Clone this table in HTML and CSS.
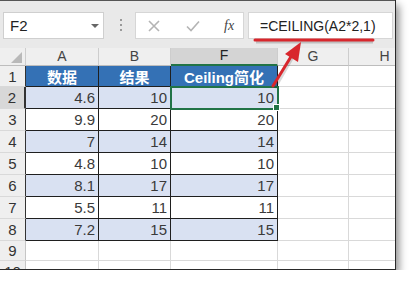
FILE: index.html
```html
<!DOCTYPE html>
<html>
<head>
<meta charset="utf-8">
<link rel="stylesheet" href="styles.css">
</head>
<body>
<div class="win">
  <div class="bar">
    <div class="namebox"><span class="nb-text">F2</span><i class="caret"></i></div>
    <div class="dots"><i></i><i></i><i></i></div>
    <div class="btns">
      <svg class="ico-x" width="12" height="12" viewBox="0 0 12 12"><path d="M1 1L11 11M11 1L1 11" stroke="#b4b4b4" stroke-width="1.6" fill="none"/></svg>
      <svg class="ico-ok" width="14" height="12" viewBox="0 0 14 12"><path d="M1 6.5L5 10.5L13 1.5" stroke="#b4b4b4" stroke-width="1.6" fill="none"/></svg>
      <span class="fx">fx</span>
    </div>
    <div class="fbox"><span class="ftext">=CEILING(A2*2,1)</span></div>
  </div>
  <div class="sheet">
    <div class="c ch corner"><i class="tri"></i></div>
    <div class="c ch">A</div>
    <div class="c ch">B</div>
    <div class="c ch chsel">F</div>
    <div class="c ch">G</div>
    <div class="c ch">H</div>

    <div class="c rh in">1</div>
    <div class="c t hd">数据</div>
    <div class="c t hd">结果</div>
    <div class="c t hd">Ceiling简化</div>
    <div class="c g"></div>
    <div class="c g"></div>

    <div class="c rh in rsel">2</div>
    <div class="c t n band">4.6</div>
    <div class="c t n band">10</div>
    <div class="c t n band sel">10</div>
    <div class="c g"></div>
    <div class="c g"></div>

    <div class="c rh in">3</div>
    <div class="c t n">9.9</div>
    <div class="c t n">20</div>
    <div class="c t n">20</div>
    <div class="c g"></div>
    <div class="c g"></div>

    <div class="c rh in">4</div>
    <div class="c t n band">7</div>
    <div class="c t n band">14</div>
    <div class="c t n band">14</div>
    <div class="c g"></div>
    <div class="c g"></div>

    <div class="c rh in">5</div>
    <div class="c t n">4.8</div>
    <div class="c t n">10</div>
    <div class="c t n">10</div>
    <div class="c g"></div>
    <div class="c g"></div>

    <div class="c rh in">6</div>
    <div class="c t n band">8.1</div>
    <div class="c t n band">17</div>
    <div class="c t n band">17</div>
    <div class="c g"></div>
    <div class="c g"></div>

    <div class="c rh in">7</div>
    <div class="c t n">5.5</div>
    <div class="c t n">11</div>
    <div class="c t n">11</div>
    <div class="c g"></div>
    <div class="c g"></div>

    <div class="c rh in">8</div>
    <div class="c t n band">7.2</div>
    <div class="c t n band">15</div>
    <div class="c t n band">15</div>
    <div class="c g"></div>
    <div class="c g"></div>

    <div class="c rh">9</div>
    <div class="c g"></div>
    <div class="c g"></div>
    <div class="c g"></div>
    <div class="c g"></div>
    <div class="c g"></div>

    <div class="c rh">10</div>
    <div class="c g"></div>
    <div class="c g"></div>
    <div class="c g"></div>
    <div class="c g"></div>
    <div class="c g"></div>
  </div>
  <svg class="anno" width="395" height="269" viewBox="0 0 395 269">
    <line x1="256" y1="42" x2="373" y2="42" stroke="rgba(0,0,0,0.18)" stroke-width="3"/>
    <line x1="255" y1="40" x2="373" y2="40" stroke="#d8262c" stroke-width="3" stroke-linecap="round"/>
    <line x1="275" y1="88" x2="294" y2="55" stroke="rgba(0,0,0,0.15)" stroke-width="3"/>
    <line x1="273" y1="86" x2="292" y2="55" stroke="#d8262c" stroke-width="3" stroke-linecap="round"/>
    <polygon points="301,42 298,62 285,54" fill="#d8262c"/>
  </svg>
</div>
</body>
</html>
```

FILE: styles.css
```css
* { box-sizing: border-box; }
body {
  margin: 0;
  background: #fff;
  font-family: "Liberation Sans", Arial, "Noto Sans CJK SC", sans-serif;
}
.win {
  position: relative;
  width: 396px;
  height: 270px;
  overflow: hidden;
  background: #fff;
  border-right: 1px solid #2a2a2a;
  border-bottom: 1px solid #2a2a2a;
  box-shadow: 3px 5px 8px rgba(0, 0, 0, 0.45);
}
.bar {
  display: flex;
  align-items: flex-start;
  height: 48px;
  padding-top: 11px;
  background: #e9e9e9;
  border-top: 1px solid #555;
}
.namebox {
  position: relative;
  display: flex;
  align-items: center;
  margin-left: 3px;
  width: 101px;
  height: 27px;
  background: #fff;
  border: 1px solid #cfcfcf;
  padding-left: 6px;
}
.nb-text { font-size: 15px; color: #222; }
.caret {
  margin-left: auto;
  margin-right: 4px;
  width: 0;
  height: 0;
  border-left: 4px solid transparent;
  border-right: 4px solid transparent;
  border-top: 4px solid #666;
}
.dots {
  display: flex;
  flex-direction: column;
  gap: 3px;
  margin-left: 16px;
  margin-top: 7px;
}
.dots i {
  display: block;
  width: 2px;
  height: 2px;
  background: #9a9a9a;
}
.btns {
  display: flex;
  align-items: center;
  margin-left: 13px;
  width: 109px;
  height: 27px;
  background: #fff;
  border: 1px solid #d6d6d6;
}
.ico-x { margin-left: 12px; }
.ico-ok { margin-left: 26px; }
.fx {
  margin-left: 24px;
  font-family: "Liberation Serif", serif;
  font-style: italic;
  font-size: 14px;
  color: #444;
}
.fbox {
  display: flex;
  align-items: center;
  margin-left: 4px;
  width: 145px;
  height: 27px;
  background: #fff;
  border: 1px solid #d6d6d6;
  padding-left: 11px;
}
.ftext { font-size: 14px; color: #222; white-space: nowrap; }
.sheet {
  display: grid;
  grid-template-columns: 26px 73px 72px 107px 71px 72px;
  grid-template-rows: 18px 21px repeat(7, 22px) 20px 22px;
  width: 421px;
}
.c {
  display: flex;
  align-items: center;
  border-right: 1px solid #d9d9d9;
  border-bottom: 1px solid #d9d9d9;
  font-size: 15px;
  color: #333;
  white-space: nowrap;
  overflow: hidden;
}
.ch {
  justify-content: center;
  align-items: flex-end;
  padding-bottom: 1px;
  background: #efefef;
  border-right-color: #cdcdcd;
  border-bottom-color: #bdbdbd;
  color: #444;
  font-size: 14px;
}
.chsel {
  background: #d4d4d4;
  border-bottom: 2px solid #217346;
  color: #222;
}
.corner { position: relative; }
.tri {
  position: absolute;
  right: 3px;
  bottom: 2px;
  width: 0;
  height: 0;
  border-left: 11px solid transparent;
  border-bottom: 11px solid #b9b9b9;
}
.rh {
  justify-content: center;
  background: #efefef;
  border-right-color: #c6c6c6;
  border-bottom-color: #d9d9d9;
  color: #333;
}
.rh.in { border-right-color: #333; }
.rsel {
  background: #d8d8d8;
  border-right: 2px solid #217346;
}
.t {
  border-right-color: #1f1f1f;
  border-bottom-color: #1f1f1f;
}
.hd {
  justify-content: center;
  background: #3471b5;
  color: #fff;
  font-weight: bold;
}
.n {
  justify-content: flex-end;
  padding-right: 3px;
  color: #3a3a3a;
}
.band { background: #d9e1f2; }
.sel {
  position: relative;
  overflow: visible;
  outline: 2px solid #217346;
  outline-offset: -1px;
}
.sel::after {
  content: "";
  position: absolute;
  right: -3px;
  bottom: -3px;
  width: 5px;
  height: 5px;
  background: #217346;
  border: 1px solid #fff;
}
.anno {
  position: absolute;
  left: 0;
  top: 0;
  pointer-events: none;
}
```
